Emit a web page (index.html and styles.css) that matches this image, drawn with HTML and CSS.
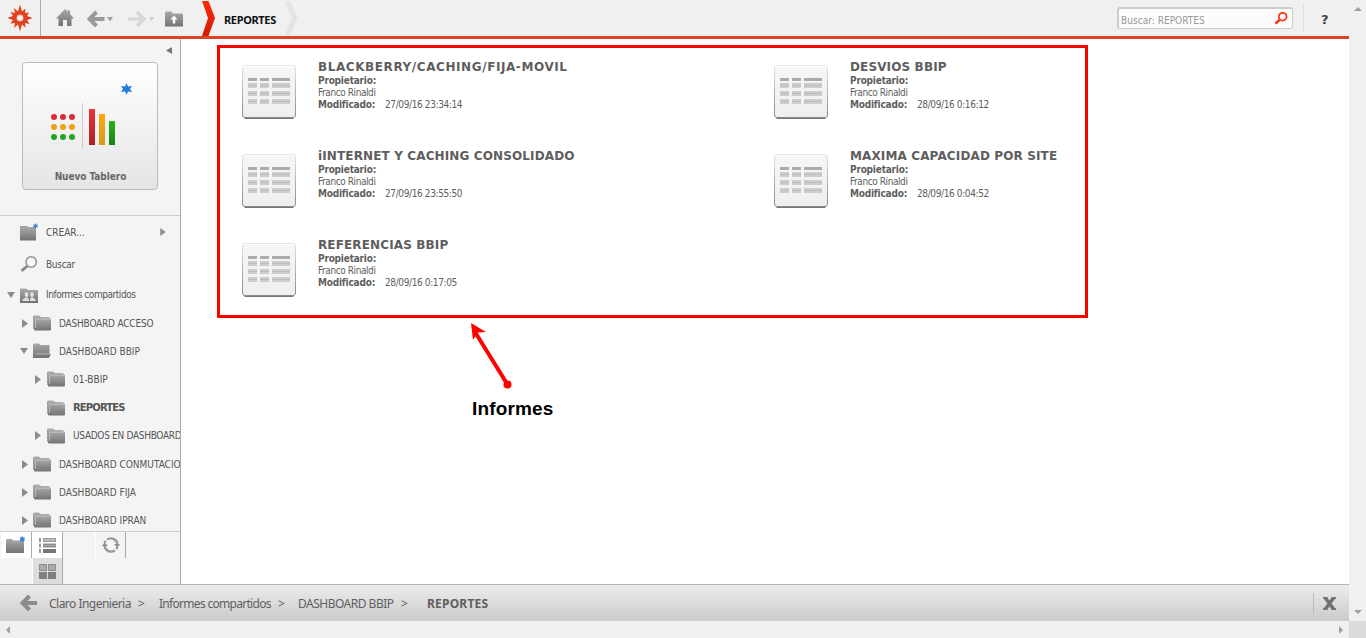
FILE: index.html
```html
<!DOCTYPE html>
<html lang="es">
<head>
<meta charset="utf-8">
<title>REPORTES</title>
<link rel="stylesheet" href="styles.css">
</head>
<body>
<svg class="defs" width="0" height="0">
  <defs>
    <linearGradient id="grey" x1="0" y1="0" x2="0" y2="1"><stop offset="0" stop-color="#a9a9a9"/><stop offset="1" stop-color="#737373"/></linearGradient>
    <linearGradient id="red" x1="0" y1="0" x2="0" y2="1"><stop offset="0" stop-color="#ff2a08"/><stop offset="1" stop-color="#cf1c00"/></linearGradient>
    <linearGradient id="barRed" x1="0" y1="0" x2="0" y2="1"><stop offset="0" stop-color="#ea3338"/><stop offset="1" stop-color="#aa2226"/></linearGradient>
    <linearGradient id="barGold" x1="0" y1="0" x2="0" y2="1"><stop offset="0" stop-color="#ffa80a"/><stop offset="1" stop-color="#d59a1c"/></linearGradient>
    <linearGradient id="barGreen" x1="0" y1="0" x2="0" y2="1"><stop offset="0" stop-color="#22b41a"/><stop offset="1" stop-color="#1a8214"/></linearGradient>
    <linearGradient id="sheet" x1="0" y1="0" x2="0" y2="1"><stop offset="0" stop-color="#f6f6f6"/><stop offset="1" stop-color="#efefef"/></linearGradient>
    <linearGradient id="sheetEdge" x1="0" y1="0" x2="0" y2="1"><stop offset="0" stop-color="#e6e6e6"/><stop offset=".5" stop-color="#b4b4b4"/><stop offset="1" stop-color="#8a8a8a"/></linearGradient>
    <symbol id="folder" viewBox="0 0 18 16"><path d="M0 1.500L1 .5H6L7.500 2H16.500V4H2V14H0Z" fill="#b0b0b0"/><path d="M.5 14V2H6.500L8 2.500" fill="none" stroke="#a0a0a0"/><rect x="1" y="3.500" width="17" height="12" rx="1" fill="url(#grey)"/><path d="M2.500 13V4.500H17" fill="none" stroke="#b8b8b8"/></symbol>
    <symbol id="folder-open" viewBox="0 0 18 16"><path d="M0 1.500L1 .5H6L7.500 2H16.500V11H4L1 15H0Z" fill="url(#grey)"/><path d="M3.500 11H18L16 15H.5Z" fill="#777"/><path d="M3 11H17" stroke="#bbb"/></symbol>
    <symbol id="spark" viewBox="0 0 6 6"><path d="M3 0V6M.4 1.500L5.600 4.500M.4 4.500L5.600 1.500" stroke="#2f80d8" stroke-width="1.300"/></symbol>
    <symbol id="right" viewBox="0 0 6 9"><path d="M0 0L6 4.500L0 9Z" fill="#8c8c8c"/></symbol>
    <symbol id="down" viewBox="0 0 8 6"><path d="M0 0H8L4 6Z" fill="#8c8c8c"/></symbol>
    <symbol id="report" viewBox="0 0 54 54">
      <path d="M2.500 53.500H51.500" stroke="#777"/>
      <rect x=".5" y=".5" width="53" height="52" rx="2.500" fill="url(#sheet)" stroke="url(#sheetEdge)"/>
      <path d="M2 1.500H52" stroke="#fff"/>
      <path d="M6 14.500H15M18 14.500H27M30 14.500H48" stroke="#ababab" stroke-width="3"/>
      <path d="M6 20.500H15M18 20.500H27M30 20.500H48M6 28.500H15M18 28.500H27M30 28.500H48M6 36.500H15M18 36.500H27M30 36.500H48" stroke="#cdcdcd" stroke-width="5"/>
      <path d="M6 20.500H15M18 20.500H27M30 20.500H48M6 28.500H15M18 28.500H27M30 28.500H48M6 36.500H15M18 36.500H27M30 36.500H48" stroke="#bdbdbd"/>
    </symbol>
  </defs>
</svg>
<div class="window">
  <div class="app">
    <header class="topbar">
      <div class="logo"><svg width="26" height="28" viewBox="-13 -14 26 28"><path d="M0-13.500L2-6.500L5.500-9.500L5-5L9-5.500L7-2L12.700 0L7 2L9.500 6L5 5L5.500 9.500L2 6.500L0 13.500L-2 6.500L-6 10L-5 5L-9.500 5.500L-7 2L-12.700 0L-7-2L-9.500-6L-5-5L-6-10L-2-6.500Z" fill="#e2401f"/><circle r="3.300" fill="#f2f0ef"/><circle r="3" fill="none" stroke="#eab5aa" stroke-width=".6"/></svg></div>
      <svg class="home" width="18" height="18" viewBox="0 0 18 18"><path d="M9 0L11.500 2.500V1.500H14V5L18 9.500H15.500V17H11V11H7V17H2.500V9.500H0Z" fill="url(#grey)"/></svg>
      <svg class="back" width="26" height="18" viewBox="0 0 26 18"><path d="M17.500 9H3M9.500 2L2.500 9L9.500 16" fill="none" stroke="#9a9a9a" stroke-width="4"/><path d="M20 7H26L23 11.500Z" fill="#a0a0a0"/></svg>
      <svg class="forward" width="26" height="18" viewBox="0 0 26 18"><path d="M0 9H15M9 2L16 9L9 16" fill="none" stroke="#d7d7d7" stroke-width="3.500"/><path d="M21 7H26L23.500 11.500Z" fill="#ccc"/></svg>
      <svg class="up" width="18" height="16" viewBox="0 0 18 16"><path d="M0 1.500L1 .5H6L8 2.500H17L18 3.500V15.500H0Z" fill="url(#grey)"/><path d="M9 4.500L12.500 8.500H10.200V12.500H7.800V8.500H5.500Z" fill="#fff"/></svg>
      <svg class="chevron" width="15" height="36" viewBox="0 0 15 36"><path d="M1 1H7.500L14 18L7.500 36H1L7 18Z" fill="url(#red)"/></svg>
      <span class="current">REPORTES</span>
      <svg class="chevron-end" width="14" height="36" viewBox="0 0 14 36"><path d="M0 1H5L12.500 18L5 35H0L7 18Z" fill="#e4e4e4"/></svg>
      <div class="search"><span>Buscar: REPORTES</span><svg width="14" height="13" viewBox="0 0 14 13"><circle cx="8.700" cy="4.700" r="3.900" fill="none" stroke="#ff2d0a" stroke-width="1.700"/><path d="M5.700 7.800L1.500 11.700" stroke="#ff2d0a" stroke-width="2.500"/></svg></div>
      <div class="help">?</div>
    </header>

    <div class="middle">
      <aside class="sidebar">
        <div class="create">
          <svg class="collapse" width="6" height="7" viewBox="0 0 6 7"><path d="M6 0V7L0 3.500Z" fill="#777"/></svg>
          <div class="board">
            <svg width="86" height="72" viewBox="0 0 86 72">
              <path d="M78.500 1L80 4.400L84 4L82 7L84 10L80 9.600L78.500 13L77 9.600L73 10L75 7L73 4L77 4.400Z" fill="#2080dc"/>
              <g fill="#d92d33"><circle cx="6" cy="35" r="3"/><circle cx="15" cy="35" r="3"/><circle cx="24" cy="35" r="3"/></g>
              <g fill="#f0a010"><circle cx="6" cy="45" r="3"/><circle cx="15" cy="45" r="3"/><circle cx="24" cy="45" r="3"/></g>
              <g fill="#20a520"><circle cx="6" cy="55" r="3"/><circle cx="15" cy="55" r="3"/><circle cx="24" cy="55" r="3"/></g>
              <path d="M34.500 21V67" stroke="#ccc"/>
              <rect x="41" y="27" width="6" height="36" fill="url(#barRed)"/><rect x="51" y="32" width="6" height="31" fill="url(#barGold)"/><rect x="61" y="39" width="6" height="24" fill="url(#barGreen)"/>
            </svg>
            <span>Nuevo Tablero</span>
          </div>
        </div>
        <nav class="tree">
          <div class="row tall"><span class="toggle"></span><svg width="20" height="18" viewBox="0 0 20 18"><rect x="0" y="4" width="16" height="13.500" fill="url(#grey)"/><path d="M0 4V3H7L8 4" fill="#999"/><use href="#spark" x="13" y="0" width="5" height="6"/></svg><span class="wide">CREAR...</span><svg class="more" width="6" height="8"><use href="#right" width="6" height="8"/></svg></div>
          <div class="row tall"><span class="toggle"></span><svg width="20" height="18" viewBox="0 0 20 18"><circle cx="11.200" cy="7" r="5.200" fill="#f8f8f8" stroke="#929292" stroke-width="1.500"/><path d="M7.300 11L1.500 15.800" stroke="#8a8a8a" stroke-width="2.800"/></svg><span>Buscar</span></div>
          <div class="row shared"><span class="toggle"><svg width="8" height="6"><use href="#down" width="8" height="6"/></svg></span><svg width="20" height="16" viewBox="0 0 20 16"><path d="M0 1.500H6L8 3H18V16H0Z" fill="url(#grey)"/><g fill="#e2e2e2"><ellipse cx="6.500" cy="7.500" rx="1.800" ry="2.500"/><path d="M2.500 14V12.500L5.500 10.500H7.500L9 12.500V14Z"/><ellipse cx="12" cy="7.500" rx="1.800" ry="2.500"/><path d="M10 14V12.500L11 10.500H13L15.500 12.500V14Z"/></g></svg><span>Informes compartidos</span></div>
          <div class="row one"><span class="toggle"><svg width="6" height="9"><use href="#right" width="6" height="9"/></svg></span><svg width="20" height="16"><use href="#folder" width="18" height="16"/></svg><span class="mid">DASHBOARD ACCESO</span></div>
          <div class="row one"><span class="toggle open"><svg width="8" height="6"><use href="#down" width="8" height="6"/></svg></span><svg width="20" height="16"><use href="#folder-open" width="18" height="16"/></svg><span class="wide">DASHBOARD BBIP</span></div>
          <div class="row two"><span class="toggle"><svg width="6" height="9"><use href="#right" width="6" height="9"/></svg></span><svg width="20" height="16"><use href="#folder" width="18" height="16"/></svg><span class="wide">01-BBIP</span></div>
          <div class="row two selected"><span class="toggle"></span><svg width="20" height="16"><use href="#folder" width="18" height="16"/></svg><span>REPORTES</span></div>
          <div class="row two"><span class="toggle"><svg width="6" height="9"><use href="#right" width="6" height="9"/></svg></span><svg width="20" height="16"><use href="#folder" width="18" height="16"/></svg><span>USADOS EN DASHBOARD</span></div>
          <div class="row one"><span class="toggle"><svg width="6" height="9"><use href="#right" width="6" height="9"/></svg></span><svg width="20" height="16"><use href="#folder" width="18" height="16"/></svg><span class="wide">DASHBOARD CONMUTACIO</span></div>
          <div class="row one"><span class="toggle"><svg width="6" height="9"><use href="#right" width="6" height="9"/></svg></span><svg width="20" height="16"><use href="#folder" width="18" height="16"/></svg><span class="wide">DASHBOARD FIJA</span></div>
          <div class="row one"><span class="toggle"><svg width="6" height="9"><use href="#right" width="6" height="9"/></svg></span><svg width="20" height="16"><use href="#folder" width="18" height="16"/></svg><span class="wide">DASHBOARD IPRAN</span></div>
        </nav>
        <div class="tools">
          <div class="tool new"><svg width="20" height="18" viewBox="0 0 20 18"><path d="M0 4L1 3H6L7.500 4.500H18V17H0Z" fill="url(#grey)"/><use href="#spark" x="13.500" y="0" width="5.500" height="6"/></svg></div>
          <div class="views">
            <div class="tool"><svg width="17" height="16" viewBox="0 0 17 16"><path d="M0 3H2M0 8.500H2M0 14H2" stroke="#999" stroke-width="4"/><path d="M4 3H17" stroke="#999" stroke-width="4"/><path d="M5 3H16" stroke="#bbb" stroke-width="2"/><path d="M4 8.500H17" stroke="#8c8c8c" stroke-width="4"/><path d="M5 8.500H16" stroke="#aaa"/><path d="M4 14H17" stroke="#777" stroke-width="4"/></svg></div>
            <div class="tool grid"><svg width="17" height="15" viewBox="0 0 17 15"><path d="M.5.5H7.500V6.500H.5ZM9.500.5H16.500V6.500H9.500Z" fill="#aaa" stroke="#8c8c8c"/><path d="M0 8H8V15H0ZM9 8H17V15H9Z" fill="#808080"/></svg></div>
          </div>
          <div class="tool refresh"><svg width="18" height="16" viewBox="0 0 18 16"><path d="M5 2.600A6.700 6.700 0 0 1 15.500 7M13 13.400A6.700 6.700 0 0 1 2.500 9M2.700 6A6.700 6.700 0 0 1 3.700 3.900M15.300 10A6.700 6.700 0 0 1 14.300 12.100" fill="none" stroke="#999" stroke-width="2.200"/><path d="M0 9L2.500 5.500L6 9ZM12 7H18L15.500 10.500Z" fill="#8c8c8c"/></svg></div>
        </div>
      </aside>

      <main class="content">
        <div class="reports">
          <article class="report"><svg width="54" height="54"><use href="#report"/></svg><div><h2 class="spaced">BLACKBERRY/CACHING/FIJA-MOVIL</h2><b>Propietario:</b><p>Franco Rinaldi</p><div class="modified"><b>Modificado:</b><span>27/09/16 23:34:14</span></div></div></article>
          <article class="report"><svg width="54" height="54"><use href="#report"/></svg><div><h2>DESVIOS BBIP</h2><b>Propietario:</b><p>Franco Rinaldi</p><div class="modified"><b>Modificado:</b><span>28/09/16 0:16:12</span></div></div></article>
          <article class="report"><svg width="54" height="54"><use href="#report"/></svg><div><h2>iINTERNET Y CACHING CONSOLIDADO</h2><b>Propietario:</b><p>Franco Rinaldi</p><div class="modified"><b>Modificado:</b><span>27/09/16 23:55:50</span></div></div></article>
          <article class="report"><svg width="54" height="54"><use href="#report"/></svg><div><h2>MAXIMA CAPACIDAD POR SITE</h2><b>Propietario:</b><p>Franco Rinaldi</p><div class="modified"><b>Modificado:</b><span>28/09/16 0:04:52</span></div></div></article>
          <article class="report"><svg width="54" height="54"><use href="#report"/></svg><div><h2>REFERENCIAS BBIP</h2><b>Propietario:</b><p>Franco Rinaldi</p><div class="modified"><b>Modificado:</b><span>28/09/16 0:17:05</span></div></div></article>
        </div>
        <div class="frame"></div>
        <svg class="arrow" width="50" height="70" viewBox="0 0 50 70"><path d="M40.500 61.500L8 9" stroke="red" stroke-width="4"/><path d="M4 0L19 9L11 9.500L6 17Z" fill="red"/><circle cx="40.500" cy="61.500" r="4" fill="red"/></svg>
        <strong class="caption">Informes</strong>
      </main>
    </div>

    <footer class="path">
      <svg width="18" height="18" viewBox="0 0 18 18"><path d="M18 9H4M10.500 2L3.500 9L10.500 16" fill="none" stroke="#8c8c8c" stroke-width="4"/></svg>
      <span class="p1">Claro Ingenieria</span><i>&gt;</i><span class="p2">Informes compartidos</span><i>&gt;</i><span class="p3">DASHBOARD BBIP</span><i>&gt;</i><b>REPORTES</b>
      <div class="close"><svg width="13" height="13" viewBox="0 0 13 13"><path d="M0 1H4.500M8.500 1H13M0 12H4.500M8.500 12H13" stroke="#777" stroke-width="2"/><path d="M2.500 1L10.500 12M10.500 1L2.500 12" stroke="#707070" stroke-width="3.500"/></svg></div>
    </footer>
  </div>
  <div class="vscroll"><svg width="8" height="4" viewBox="0 0 8 4"><path d="M0 4H8L4 0Z" fill="#a0a0a0"/></svg><svg width="8" height="4" viewBox="0 0 8 4"><path d="M0 0H8L4 4Z" fill="#a0a0a0"/></svg></div>
  <div class="hscroll"><svg width="4" height="8" viewBox="0 0 4 8"><path d="M4 0V8L0 4Z" fill="#a0a0a0"/></svg><svg width="4" height="8" viewBox="0 0 4 8"><path d="M0 0V8L4 4Z" fill="#a0a0a0"/></svg></div>
  <div class="corner"></div>
</div>
</body>
</html>
```
FILE: styles.css
```css
* { box-sizing: border-box; }
body { margin: 0; color: #555; font-family: "DejaVu Sans Condensed", "DejaVu Sans", sans-serif; font-stretch: condensed; font-size: 10px; overflow: hidden; }
svg { flex: none; display: block; }
.defs { position: absolute; }
.window { display: grid; grid-template: 621px 17px / 1349px 17px; width: 1366px; height: 638px; background: #fff; }
.app { display: flex; flex-direction: column; min-width: 0; }

.topbar { display: flex; align-items: center; height: 39px; background: #f0f0f0; border-bottom: 3px solid #dc4426; }
.logo { width: 41px; height: 36px; padding: 4px 0 0 7px; border-right: 1px solid #aaa; }
.home { margin-left: 15px; }
.back { margin-left: 13px; margin-top: 1px; }
.forward { margin-left: 15px; margin-top: 1px; }
.up { margin-left: 11px; margin-top: 1px; }
.chevron { margin-left: 18px; }
.current { width: 60px; margin-left: 8px; padding-top: 2px; color: #111; font: bold 11px "Noto Sans", sans-serif; letter-spacing: -.35px; line-height: 15px; }
.chevron-end { margin-left: 1px; }
.search { display: flex; align-items: center; justify-content: space-between; width: 176px; height: 22px; margin-left: auto; padding: 3px 4px 0 2px; color: #999; background: #fcfcfc; border: 2px solid #ccc; border-right-width: 1px; border-bottom-width: 1px; border-radius: 3px; }
.search span { letter-spacing: .03px; }
.search svg { margin-top: -4px; }
.help { display: flex; align-items: center; width: 46px; height: 28px; margin-left: 10px; padding: 2px 0 0 17px; border-left: 1px solid #ddd; color: #444; font: bold 13px "DejaVu Sans", sans-serif; }

.middle { display: flex; height: 545px; }
.sidebar { display: flex; flex-direction: column; width: 181px; background: #f4f4f4; border-right: 1px solid #aaa; overflow: hidden; }
.create { height: 177px; border-bottom: 1px solid #ccc; }
.collapse { margin: 8px 0 8px 166px; }
.board { display: flex; flex-direction: column; align-items: center; width: 136px; height: 128px; margin-left: 22px; padding-top: 19px; background: linear-gradient(#fff, #e5e5e5); border: 1px solid #bbb; border-radius: 4px; }
.board svg { margin-left: 2px; }
.board span { margin: 16px 0 0 1px; font: bold 10px/14px "DejaVu Sans Condensed", "DejaVu Sans", sans-serif; letter-spacing: -.05px; color: #666; }
.tree { height: 315px; overflow: hidden; white-space: nowrap; }
.row { display: flex; align-items: center; height: 28.200px; padding-left: 6px; letter-spacing: -.3px; }
.row > span:not(.toggle) { margin-left: 6px; }
.row > .wide { letter-spacing: 0; }
.row > .mid { letter-spacing: -.2px; }
.row > .more { margin-left: auto; margin-right: 14px; }
.tall { height: 32px; }
.shared { height: 29px; letter-spacing: -.45px; }
.toggle { display: flex; width: 14px; flex: none; }
.toggle svg { margin-left: 1px; }
.one { padding-left: 19px; }
.two { padding-left: 33px; }
.one .toggle svg { margin-left: 3px; }
.one .open svg { margin-left: 1px; }
.two .toggle svg { margin-left: 2px; }
.selected { font: bold 10px "DejaVu Sans", sans-serif; letter-spacing: -.85px; }
.tools { display: flex; align-items: flex-start; height: 53px; border-top: 1px solid #ccc; }
.tool { display: flex; align-items: center; justify-content: center; height: 26px; background: #fff; }
.new { width: 31px; margin-left: 1px; border-right: 1px solid #aaa; }
.views { width: 31px; margin-left: 0; border-left: 1px solid #fff; border-right: 1px solid #aaa; }
.grid { height: 27px; background: #ddd; }
.refresh { width: 31px; margin-left: 32px; border-left: 1px solid #fff; border-right: 1px solid #aaa; background: #f4f4f4; }

.content { position: relative; flex: 1; padding: 20px 0 0 61px; }
.reports { display: grid; grid-template-columns: 532px 532px; grid-auto-rows: 89px; color: #5e5e5e; }
.report { display: flex; gap: 22px; line-height: 12px; letter-spacing: -.38px; }
.report > svg { margin-top: 6px; }
.report h2 { margin: 0; color: #5e5e5e; font: bold 12px/16px "DejaVu Sans", sans-serif; letter-spacing: .13px; white-space: nowrap; }
.report .spaced { letter-spacing: .58px; }
.report p { margin: 0; letter-spacing: -.42px; }
.report b { display: block; font: bold 10px/12px "DejaVu Sans Condensed", "DejaVu Sans", sans-serif; letter-spacing: -.2px; }
.modified { display: flex; }
.modified b { width: 67px; }
.frame { position: absolute; left: 36px; top: 6px; width: 871px; height: 273px; border: 3px solid red; }
.arrow { position: absolute; left: 286px; top: 284px; }
.caption { position: absolute; left: 291px; top: 359px; color: #000; font: bold 19px/22px "Liberation Sans", Arial, sans-serif; letter-spacing: .15px; }

.path { display: flex; align-items: center; height: 37px; padding: 0 0 0 19px; border-top: 1px solid #b5b5b5; background: linear-gradient(#ececec, #cbcbcb); font-family: "Noto Sans", sans-serif; font-size: 12px; color: #606060; white-space: nowrap; }
.path span { flex: none; }
.p1 { width: 83px; margin-left: 12px; letter-spacing: -.52px; }
.p2 { width: 113px; letter-spacing: -.7px; }
.p3 { width: 97px; margin-left: -1px; letter-spacing: -.5px; }
.path i { width: 27px; padding-left: 6px; font-style: normal; }
.path b { margin-left: 5px; letter-spacing: .2px; }
.close { display: flex; align-items: center; width: 36px; height: 20px; margin-left: auto; padding-left: 9px; border-left: 1px solid #bbb; }
.vscroll { display: flex; flex-direction: column; align-items: center; justify-content: space-between; padding: 7px 0 7px; background: #f0f0f0; }
.hscroll { display: flex; align-items: center; justify-content: space-between; padding: 0 6px; background: #f0f0f0; }
.corner { background: #dcdcdc; }
```
